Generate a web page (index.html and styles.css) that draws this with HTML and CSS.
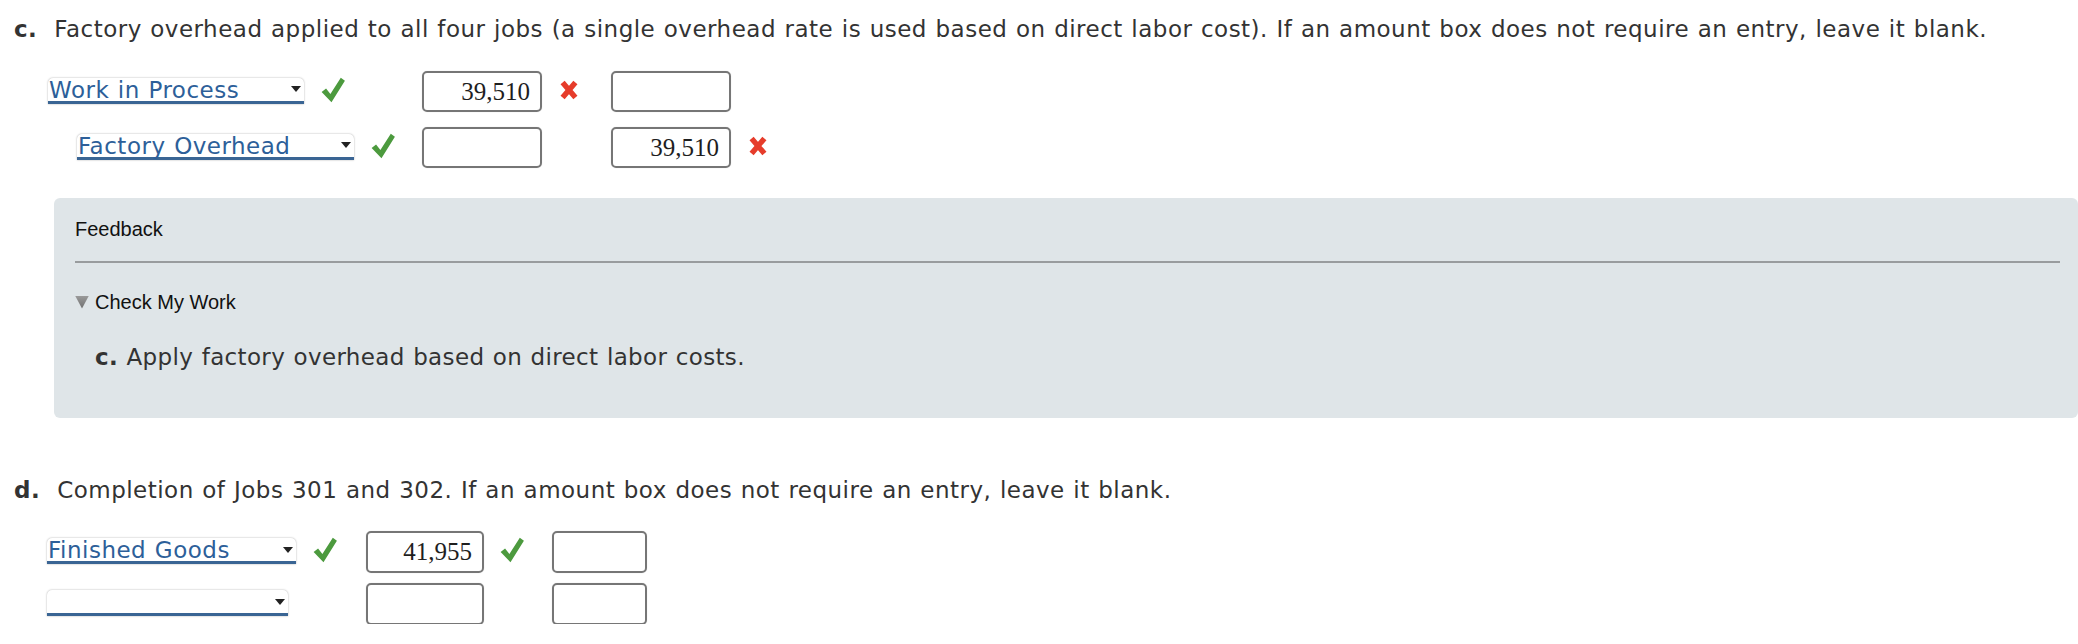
FILE: index.html
```html
<!DOCTYPE html>
<html>
<head>
<meta charset="utf-8">
<link rel="stylesheet" href="styles.css">
</head>
<body>
<div class="page">
  <p class="prompt"><b class="lbl">c.</b>Factory overhead applied to all four jobs (a single overhead rate is used based on direct labor cost). If an amount box does not require an entry, leave it blank.</p>

  <div class="journal journal-c">
    <div class="jrow">
      <div class="acct">
        <div class="select w-wip"><span class="sel-text">Work in Process</span><span class="arrow"></span></div>
        <svg class="ok" viewBox="0 0 22 24"><path d="M0.5 13.8 L4.6 10.6 L8.6 15.8 L18.2 0.8 L22 3.4 L9.6 23.4 Z"/></svg>
      </div>
      <div class="cell"><span class="amount">39,510</span><svg class="bad" viewBox="0 0 18 20"><path d="M2.6 2.4 L15.4 17.6 M15.4 2.4 L2.6 17.6"/></svg></div>
      <div class="cell"><span class="amount"></span></div>
    </div>
    <div class="jrow">
      <div class="acct credit">
        <div class="select w-foh"><span class="sel-text">Factory Overhead</span><span class="arrow"></span></div>
        <svg class="ok" viewBox="0 0 22 24"><path d="M0.5 13.8 L4.6 10.6 L8.6 15.8 L18.2 0.8 L22 3.4 L9.6 23.4 Z"/></svg>
      </div>
      <div class="cell"><span class="amount"></span></div>
      <div class="cell"><span class="amount">39,510</span><svg class="bad" viewBox="0 0 18 20"><path d="M2.6 2.4 L15.4 17.6 M15.4 2.4 L2.6 17.6"/></svg></div>
    </div>
  </div>

  <div class="feedback">
    <div class="fb-title">Feedback</div>
    <div class="fb-rule"></div>
    <div class="fb-toggle"><span class="tri"></span>Check My Work</div>
    <p class="fb-text"><b>c.</b> Apply factory overhead based on direct labor costs.</p>
  </div>

  <p class="prompt prompt-d"><b class="lbl">d.</b>Completion of Jobs 301 and 302. If an amount box does not require an entry, leave it blank.</p>

  <div class="journal journal-d">
    <div class="jrow">
      <div class="acct">
        <div class="select w-fg"><span class="sel-text">Finished Goods</span><span class="arrow"></span></div>
        <svg class="ok" viewBox="0 0 22 24"><path d="M0.5 13.8 L4.6 10.6 L8.6 15.8 L18.2 0.8 L22 3.4 L9.6 23.4 Z"/></svg>
      </div>
      <div class="cell"><span class="amount">41,955</span><svg class="ok" viewBox="0 0 22 24"><path d="M0.5 13.8 L4.6 10.6 L8.6 15.8 L18.2 0.8 L22 3.4 L9.6 23.4 Z"/></svg></div>
      <div class="cell"><span class="amount small"></span></div>
    </div>
    <div class="jrow">
      <div class="acct">
        <div class="select w-empty"><span class="sel-text"></span><span class="arrow"></span></div>
      </div>
      <div class="cell"><span class="amount"></span></div>
      <div class="cell"><span class="amount small"></span></div>
    </div>
  </div>
</div>
</body>
</html>
```

FILE: styles.css
```css
html, body {
  margin: 0;
  padding: 0;
  background: #ffffff;
}

.page {
  width: 2078px;
  font-family: "DejaVu Sans", Verdana, sans-serif;
  color: #333333;
}

.prompt {
  margin: 16px 0 0 14px;
  font-size: 23px;
  line-height: 26px;
  letter-spacing: 0.48px;
  word-spacing: 0.8px;
  white-space: nowrap;
}

.lbl {
  margin-right: 17px;
}

.journal {
  display: flex;
  flex-direction: column;
}

.journal-c {
  margin: 29px 0 0 48px;
  gap: 15px;
}

.journal-c .jrow {
  grid-template-columns: 374px 189px auto;
}

.journal-d {
  margin: 28px 0 0 47px;
  gap: 11px;
}

.journal-d .jrow {
  grid-template-columns: 319px 186px auto;
}

.jrow {
  display: grid;
  align-items: center;
  height: 41px;
}

.acct {
  display: flex;
  align-items: center;
  gap: 17px;
}

.acct.credit {
  padding-left: 29px;
}

.cell {
  display: flex;
  align-items: center;
  gap: 18px;
}

.journal-d .cell {
  gap: 16px;
}

.select {
  box-sizing: border-box;
  height: 26px;
  display: flex;
  align-items: center;
  justify-content: space-between;
  background: #ffffff;
  border-radius: 5px 5px 0 0;
  border-bottom: 3px solid #3a6594;
  box-shadow: 0 0 2px rgba(0, 0, 0, 0.35);
  padding: 0 3px 0 1px;
  margin-top: -2px;
}

.w-wip { width: 256px; }
.w-foh { width: 277px; }
.w-fg { width: 249px; }
.w-empty { width: 241px; }

.sel-text {
  font-size: 23px;
  line-height: 23px;
  letter-spacing: 0.5px;
  word-spacing: 0.8px;
  color: #2d5f99;
  white-space: nowrap;
  margin-top: 2px;
}

.arrow {
  width: 0;
  height: 0;
  border-left: 5px solid transparent;
  border-right: 5px solid transparent;
  border-top: 6px solid #222222;
}

.ok {
  width: 24px;
  height: 26px;
  fill: #4c9a3e;
  flex: none;
  margin-top: -4px;
}

.bad {
  width: 18px;
  height: 20px;
  stroke: #e63c2b;
  stroke-width: 5.4;
  fill: none;
  flex: none;
  margin-top: -4px;
}

.amount {
  box-sizing: border-box;
  width: 120px;
  height: 41px;
  border: 2px solid #767676;
  border-radius: 5px;
  font-family: "Liberation Serif", "Times New Roman", serif;
  font-size: 25px;
  line-height: 37px;
  text-align: right;
  padding-right: 10px;
  color: #1e1e1e;
  box-shadow: 0 0 1px rgba(0, 0, 0, 0.2);
}

.journal-d .amount {
  width: 118px;
  height: 42px;
}

.journal-d .amount.small {
  width: 95px;
}

.feedback {
  margin: 30px 0 0 54px;
  height: 220px;
  box-sizing: border-box;
  background: #dfe5e8;
  border-radius: 6px;
  padding: 20px 18px 0 21px;
  font-family: "Liberation Sans", Arial, sans-serif;
  color: #111111;
}

.fb-title {
  font-size: 20px;
  line-height: 22px;
}

.fb-rule {
  height: 2px;
  background: #999c9e;
  margin-top: 21px;
}

.fb-toggle {
  margin-top: 28px;
  display: flex;
  align-items: center;
  font-size: 20px;
  line-height: 22px;
}

.tri {
  width: 14px;
  height: 13px;
  margin-right: 6px;
  clip-path: polygon(0 0, 100% 0, 50% 100%);
  background: linear-gradient(to bottom, #9a9a9a, #6e6e6e);
}

.fb-text {
  margin: 31px 0 0 20px;
  font-family: "DejaVu Sans", Verdana, sans-serif;
  font-size: 23px;
  line-height: 26px;
  letter-spacing: 0.35px;
  word-spacing: 0.8px;
  color: #333333;
}

.prompt-d {
  margin-top: 59px;
}
```
